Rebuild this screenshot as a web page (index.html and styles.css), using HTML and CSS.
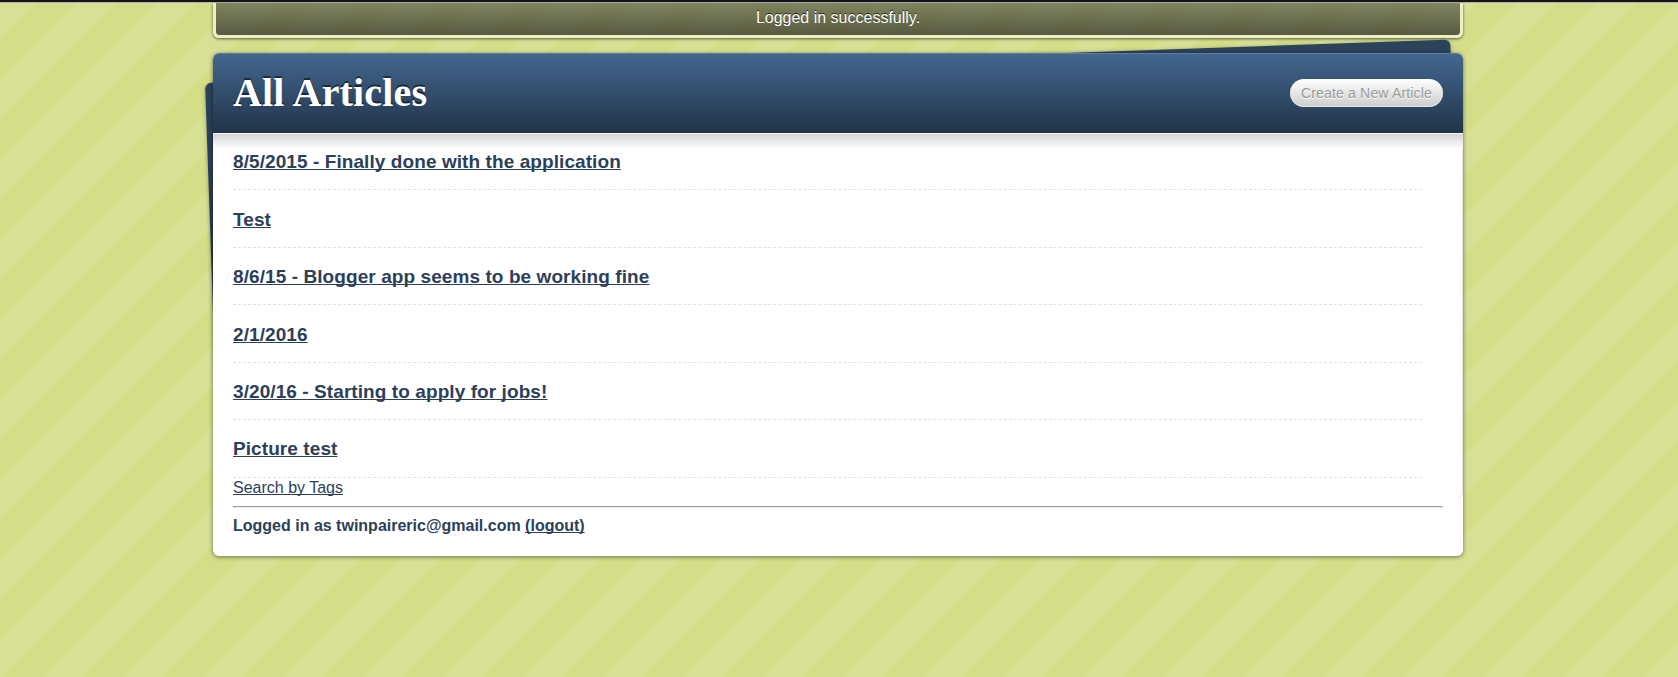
FILE: index.html
```
<!DOCTYPE html>
<html lang="en">
<head>
<meta charset="utf-8">
<title>All Articles</title>
<link rel="stylesheet" href="styles.css">
</head>
<body>
<p class="flash">Logged in successfully.</p>
<div class="container">
  <div class="backdrop"></div>
  <div class="sheet">
    <main class="content">
      <header class="header">
        <h1 class="title">All Articles</h1>
        <a class="new-article">Create a New Article</a>
      </header>
      <ul class="articles">
        <li class="article"><a>8/5/2015 - Finally done with the application</a></li>
        <li class="article"><a>Test</a></li>
        <li class="article"><a>8/6/15 - Blogger app seems to be working fine</a></li>
        <li class="article"><a>2/1/2016</a></li>
        <li class="article"><a>3/20/16 - Starting to apply for jobs!</a></li>
        <li class="article"><a>Picture test</a></li>
      </ul>
      <a class="tags">Search by Tags</a>
    </main>
    <footer class="account">
      <hr class="rule">
      <h6 class="user">Logged in as twinpaireric@gmail.com <a>(logout)</a></h6>
    </footer>
  </div>
</div>
</body>
</html>
```
FILE: styles.css
```
*, ::before { box-sizing: border-box; margin: 0; padding: 0; }
html { background: linear-gradient(135deg, #d8e094 25%, #d4dd87 25% 50%, #d8e094 50% 75%, #d4dd87 75%) 0 0 / 80px 80px; }
body {
  min-height: 677px;
  padding-right: 2px;
  font: 16px/24px "Liberation Sans", Arial, sans-serif;
  color: #2c4059;
}
body::before {
  content: "";
  display: block;
  height: 3px;
  margin-right: -2px;
  border-bottom: 1px solid #b5b3b5;
  background: #141418;
}
a {
  color: inherit;
  text-decoration: underline 1px;
  text-decoration-skip-ink: none;
  text-underline-offset: 1px;
}
.flash {
  width: 1250px;
  height: 35px;
  margin: 0 auto 15px;
  padding-top: 3px;
  border: 3px solid #ecf0c6;
  border-top: 0;
  border-radius: 0 0 6px 6px;
  background: linear-gradient(rgba(50, 50, 50, .52), rgba(50, 50, 40, .77)) padding-box;
  box-shadow: 0 1px 3px rgba(0, 0, 0, .6);
  color: #fff;
  text-align: center;
  text-shadow: 0 -1px 0 rgba(0, 0, 0, .7);
}
.container { position: relative; width: 1250px; height: 503px; margin: 0 auto; }
.backdrop {
  position: absolute;
  left: -8px;
  top: 30px;
  width: 1246px;
  height: 300px;
  border-radius: 6px;
  transform: rotate(-2deg);
  transform-origin: 0 0;
  background: linear-gradient(#2c435c, #223449);
  box-shadow: 0 1px 4px rgba(0, 0, 0, .3);
}
.sheet {
  position: relative;
  height: 503px;
  border-radius: 6px;
  background: #fff;
  box-shadow: 0 1px 4px rgba(0, 0, 0, .5);
}
.content { height: 445px; border-radius: 6px; box-shadow: inset -1px 0 0 #e2e2e6; }
.header {
  display: flex;
  align-items: center;
  justify-content: space-between;
  height: 80px;
  padding: 0 20px;
  border-radius: 6px 6px 0 0;
  background: linear-gradient(#43678f, #223449);
  box-shadow: inset 0 1px 0 rgba(255, 255, 255, .15);
}
.title {
  font: bold 40px/46px "Liberation Serif", "Times New Roman", serif;
  letter-spacing: .17px;
  color: #fff;
  text-shadow: 0 -2px 0 rgba(0, 0, 0, .5);
}
.new-article {
  height: 28px;
  padding: 0 11px;
  border-radius: 14px;
  background: linear-gradient(#fff, #ccc);
  box-shadow: inset 0 -1px 0 rgba(255, 255, 255, .5);
  color: #999;
  font-size: 14px;
  letter-spacing: .17px;
  line-height: 28px;
  text-decoration: none;
  text-shadow: 0 1px 0 #fff;
}
.articles {
  padding: 0 41px 0 20px;
  list-style: none;
  background: linear-gradient(#f5f5f5 0 1px, #d4d4d4 1px, #fff 16px) no-repeat 0 0 / 1250px 16px;
}
.article {
  height: 57.5px;
  padding-top: 17px;
  border-bottom: 1px dashed #e2e2e2;
  font-size: 19px;
  font-weight: bold;
  letter-spacing: .08px;
}
.article:first-child { height: 57px; }
.article:nth-child(2), .article:nth-child(4) { padding-top: 18px; }
.tags { display: block; width: max-content; margin-left: 20px; line-height: 19px; }
.account { padding: 8px 20px 0; }
.rule { height: 2px; border: 1px solid; border-color: #9a9a9a #eee #eee #9a9a9a; }
.user { padding-top: 6px; font-size: 16px; }
```
